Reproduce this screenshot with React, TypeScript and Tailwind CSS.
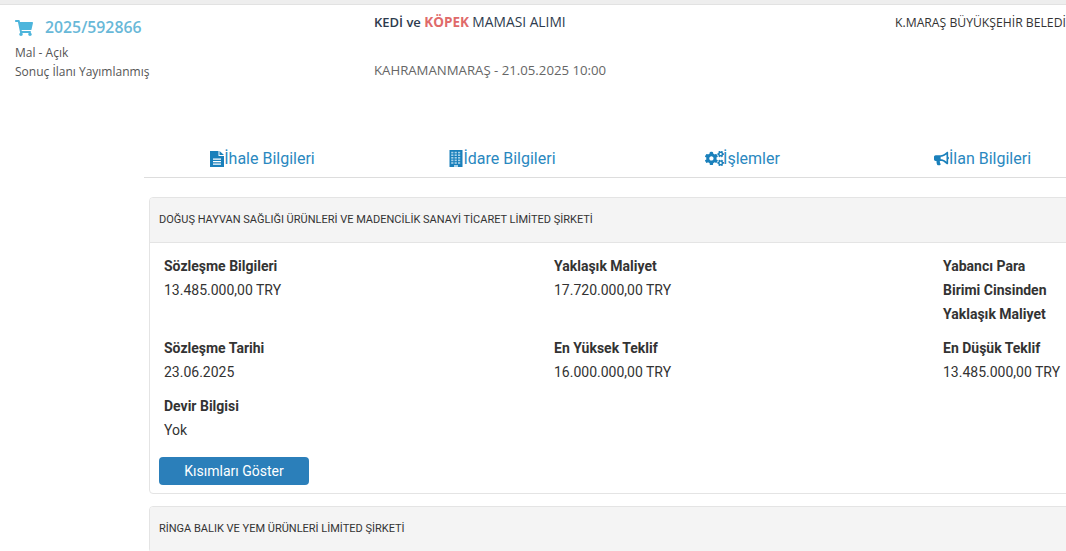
import { FaShoppingCart, FaCogs, FaBullhorn } from "react-icons/fa";

function FileIcon() {
  return (
    <svg width="14" height="16" viewBox="0 0 14 16" className="text-[#1a80bb] shrink-0" fill="currentColor">
      <path fillRule="evenodd" d="M0 0H8.5V5H14V16H0ZM3 7.5V8.7H11V7.5ZM3 10V11.2H11V10ZM3 12.5V13.7H11V12.5Z" />
      <path d="M9.5 0L14 4H9.5Z" />
    </svg>
  );
}

function BuildingIcon() {
  const windows: [number, number][] = [];
  for (let r = 0; r < 5; r++) for (let c = 0; c < 3; c++) windows.push([2.2 + c * 3.4, 1.8 + r * 2.6]);
  return (
    <svg width="14" height="17" viewBox="0 0 14 17" className="text-[#1a80bb] shrink-0">
      <rect x="0.5" width="13" height="17" fill="currentColor" />
      {windows.map(([x, y]) => (
        <rect key={`${x}-${y}`} x={x} y={y} width="2.2" height="1.6" fill="#a9d3ea" />
      ))}
      <rect x="5" y="15" width="4" height="2" fill="#a9d3ea" />
    </svg>
  );
}

function Cogs() {
  return <FaCogs className="w-[19px] h-[17px] text-[#1a80bb] shrink-0 -mr-[1px]" />;
}

function Horn() {
  return <FaBullhorn className="w-[15px] h-[15px] text-[#1a80bb] shrink-0" />;
}

const tabs = [
  { label: "İhale Bilgileri", icon: <FileIcon /> },
  { label: "İdare Bilgileri", icon: <BuildingIcon /> },
  { label: "İşlemler", icon: <Cogs /> },
  { label: "İlan Bilgileri", icon: <Horn /> },
];

function Field({ label, value }: { label: string; value?: string }) {
  return (
    <div className="text-[14px] leading-[24px] text-[#333]">
      <div className="font-bold">{label}</div>
      {value && <div>{value}</div>}
    </div>
  );
}

export default function App() {
  return (
    <div className="w-[1066px] h-[551px] overflow-hidden bg-white font-['Roboto',sans-serif]">
      <div className="h-[5px] bg-[#eeeeee] border-b border-[#e2e2e2]" />
      <div className="flex w-[1300px] h-[123px] font-['Open_Sans',sans-serif]">
        <div className="w-[374px] pl-[15px] pt-[11px]">
          <div className="flex items-center h-[24px]">
            <FaShoppingCart className="w-[18px] h-[16px] text-[#4db5dc]" />
            <span className="ml-[12px] text-[15.8px] font-semibold text-[#68b8d8]">2025/592866</span>
          </div>
          <div className="text-[12px] leading-[19px] text-[#555] mt-[3px]">Mal - Açık</div>
          <div className="text-[12px] leading-[19px] text-[#555]">Sonuç İlanı Yayımlanmış</div>
        </div>
        <div className="w-[521px]">
          <div className="pt-[7px] text-[13px] leading-[20px] font-semibold text-[#2d3b4e]">
            KEDİ ve <span className="text-[13.5px] font-bold text-[#e06a6a]">KÖPEK</span> <span className="text-[13.8px] font-medium">MAMASI ALIMI</span>
          </div>
          <div className="mt-[28px] text-[13.2px] leading-[20px] text-[#666]">KAHRAMANMARAŞ - 21.05.2025 10:00</div>
        </div>
        <div className="pt-[8px] text-[12.2px] leading-[20px] text-[#333] whitespace-nowrap">K.MARAŞ BÜYÜKŞEHİR BELEDİYESİ</div>
      </div>

      <div className="ml-[144px] w-[1100px] h-[50px] border-b border-[#dddddd]">
        <div className="-ml-[1.5px] w-[960px] h-full grid grid-cols-4">
          {tabs.map(({ label, icon }) => (
            <div key={label} className="flex items-center justify-center pt-[12px] text-[16px] text-[#2a88c0]">
              {icon}
              <span>{label}</span>
            </div>
          ))}
        </div>
      </div>

      <div className="ml-[149px] mt-[19px] w-[1000px]">
        <div className="rounded-[4px] border border-[#e4e4e4] overflow-hidden">
          <div className="h-[45px] bg-[#f4f4f4] border-b border-[#e4e4e4] flex items-center pl-[9px] text-[11px] text-[#333]">
            DOĞUŞ HAYVAN SAĞLIĞI ÜRÜNLERİ VE MADENCİLİK SANAYİ TİCARET LİMİTED ŞİRKETİ
          </div>
          <div className="pl-[14px] pt-[11px] pb-[8px]">
            <div className="grid grid-cols-[390px_389px_120px]">
              <div className="h-[82px]"><Field label="Sözleşme Bilgileri" value="13.485.000,00 TRY" /></div>
              <Field label="Yaklaşık Maliyet" value="17.720.000,00 TRY" />
              <Field label="Yabancı Para Birimi Cinsinden Yaklaşık Maliyet" />
              <div className="h-[58px]"><Field label="Sözleşme Tarihi" value="23.06.2025" /></div>
              <Field label="En Yüksek Teklif" value="16.000.000,00 TRY" />
              <Field label="En Düşük Teklif" value="13.485.000,00 TRY" />
            </div>
            <Field label="Devir Bilgisi" value="Yok" />
            <button className="block mt-[15px] -ml-[5px] w-[150px] h-[28px] rounded-[4px] bg-[#2b7fba] text-white text-[14px] font-normal">
              Kısımları Göster
            </button>
          </div>
        </div>
        <div className="mt-[12px] rounded-[4px] border border-[#e4e4e4] overflow-hidden">
          <div className="h-[45px] bg-[#f4f4f4] flex items-center pl-[9px] pb-[1px] text-[11px] text-[#333]">
            RİNGA BALIK VE YEM ÜRÜNLERİ LİMİTED ŞİRKETİ
          </div>
        </div>
      </div>
    </div>
  );
}
